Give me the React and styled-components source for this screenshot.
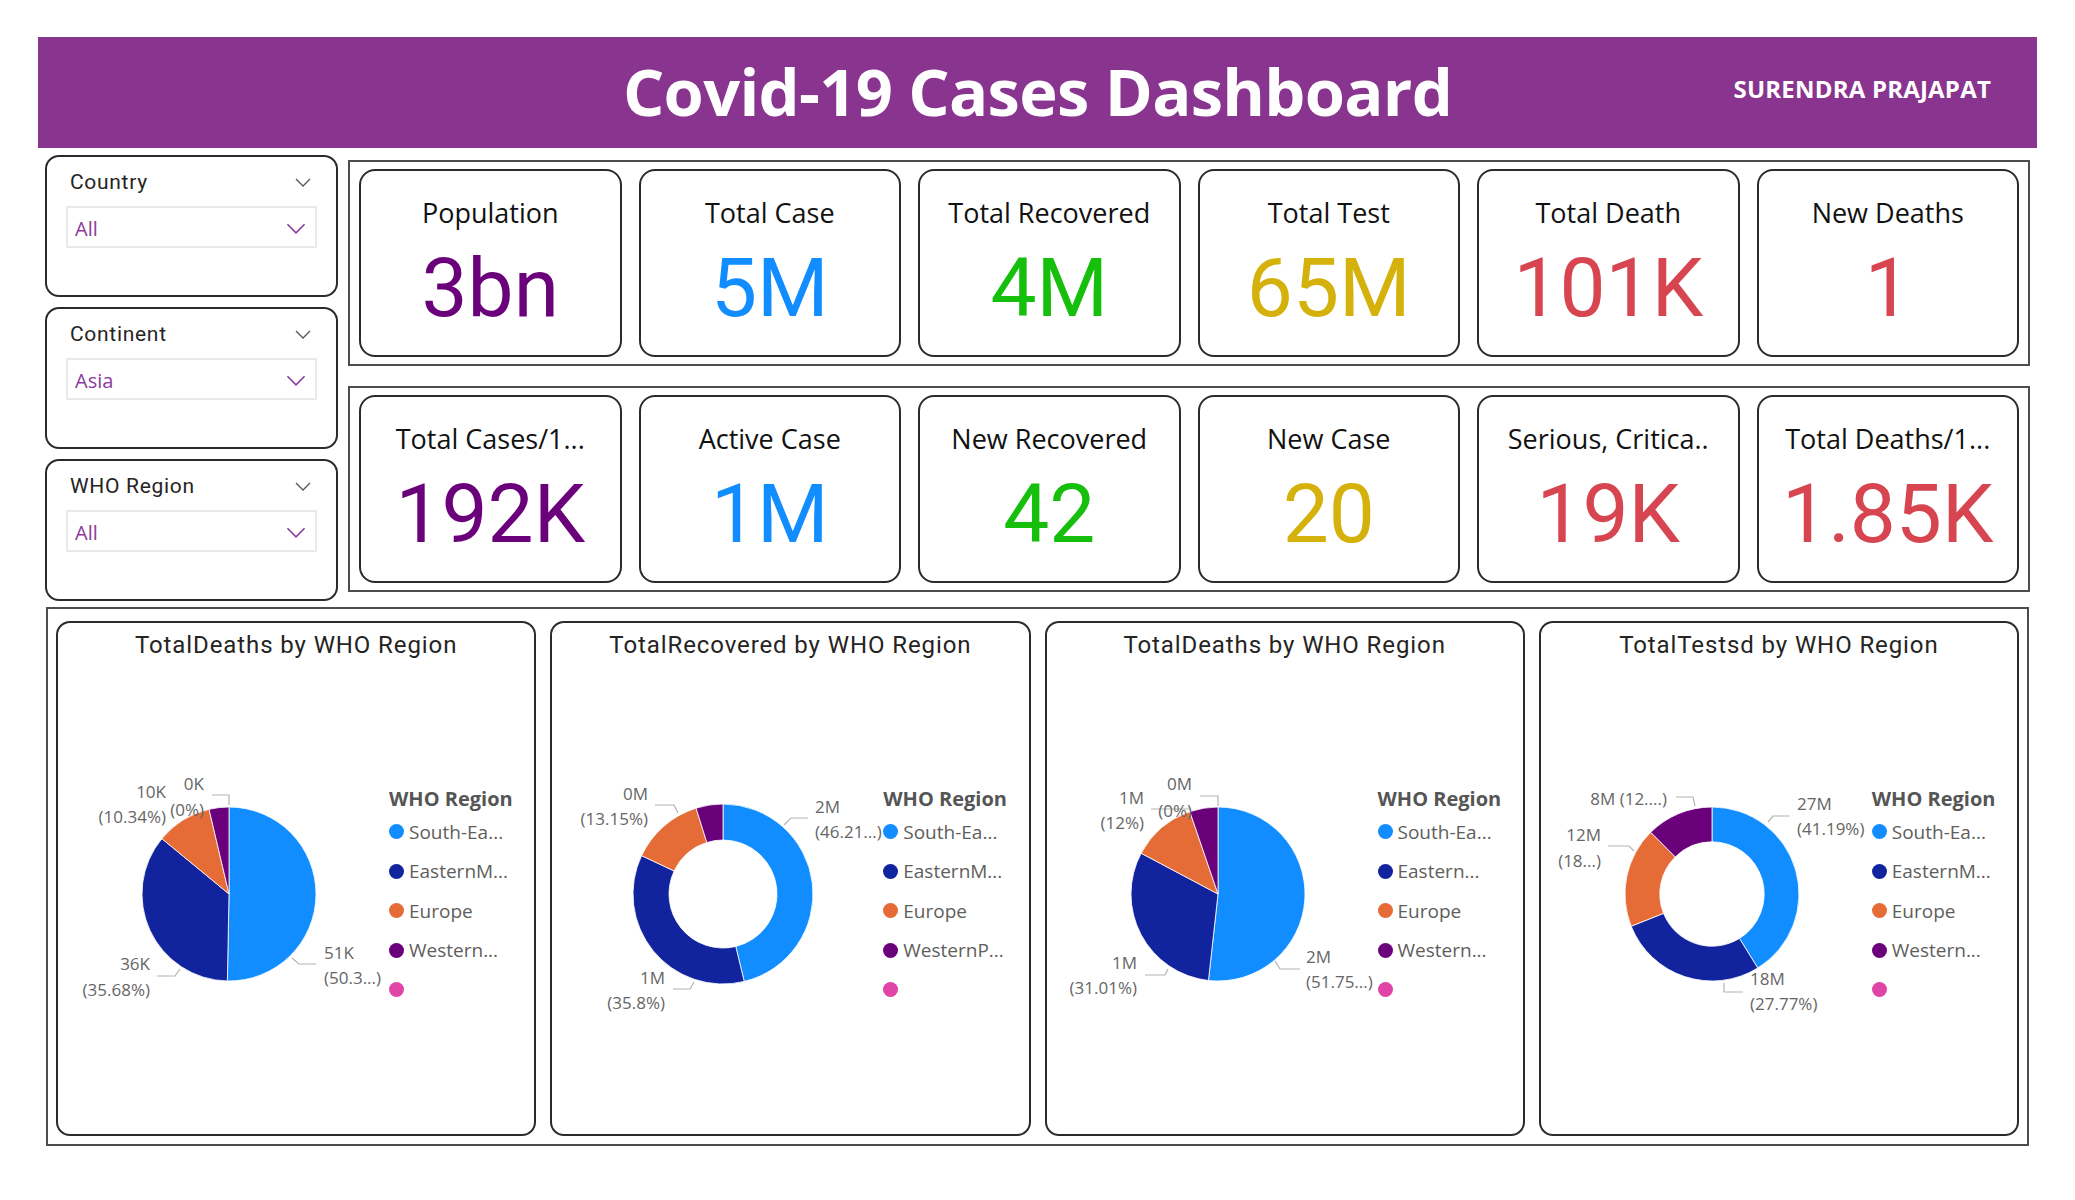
import React from "react";
import styled, { createGlobalStyle } from "styled-components";

const GlobalStyle = createGlobalStyle`
  html, body {
    margin: 0;
    padding: 0;
    background: #ffffff;
  }
  body {
    font-family: "Open Sans", "Segoe UI", sans-serif;
  }
`;

const SLICE_COLORS = ["#118DFF", "#12239E", "#E66C37", "#6B007B"];

const slicers = [
    { title: "Country", value: "All" },
    { title: "Continent", value: "Asia" },
    { title: "WHO Region", value: "All" },
];

const kpiRows = [
    [
        { label: "Population", value: "3bn", color: "#6B007B" },
        { label: "Total Case", value: "5M", color: "#118DFF" },
        { label: "Total Recovered", value: "4M", color: "#15BF0C" },
        { label: "Total Test", value: "65M", color: "#D5B10C" },
        { label: "Total Death", value: "101K", color: "#D64550" },
        { label: "New Deaths", value: "1", color: "#D64550" },
    ],
    [
        { label: "Total Cases/1...", value: "192K", color: "#6B007B" },
        { label: "Active Case", value: "1M", color: "#118DFF" },
        { label: "New Recovered", value: "42", color: "#15BF0C" },
        { label: "New Case", value: "20", color: "#D5B10C" },
        { label: "Serious, Critica..", value: "19K", color: "#D64550" },
        { label: "Total Deaths/1...", value: "1.85K", color: "#D64550" },
    ],
];

const charts = [
    {
        title: "TotalDeaths by WHO Region",
        donut: false,
        r: 87,
        values: [50.3, 35.68, 10.34, 3.68],
        legend: ["South-Ea...", "EasternM...", "Europe", "Western..."],
        labels: [
            { t: "0K", x: -25, y: -109, a: "end" },
            { t: "(0%)", x: -25, y: -83, a: "end" },
            { t: "10K", x: -63, y: -101, a: "end" },
            { t: "(10.34%)", x: -63, y: -76, a: "end" },
            { t: "36K", x: -79, y: 71, a: "end" },
            { t: "(35.68%)", x: -79, y: 97, a: "end" },
            { t: "51K", x: 95, y: 60, a: "start" },
            { t: "(50.3...)", x: 95, y: 85, a: "start" },
        ],
        lines: [
            [-17, -99, 0, -99, 0, -89],
            [-72, 82, -54, 82, -49, 75],
            [63, 64, 70, 70, 87, 70],
        ],
    },
    {
        title: "TotalRecovered by WHO Region",
        donut: true,
        r: 90,
        values: [46.21, 35.8, 13.15, 4.84],
        legend: ["South-Ea...", "EasternM...", "Europe", "WesternP..."],
        labels: [
            { t: "0M", x: -75, y: -99, a: "end" },
            { t: "(13.15%)", x: -75, y: -74, a: "end" },
            { t: "2M", x: 92, y: -86, a: "start" },
            { t: "(46.21...)", x: 92, y: -61, a: "start" },
            { t: "1M", x: -58, y: 85, a: "end" },
            { t: "(35.8%)", x: -58, y: 110, a: "end" },
        ],
        lines: [
            [-68, -89, -49, -89, -45, -81],
            [61, -69, 68, -76, 85, -76],
            [-50, 95, -33, 95, -29, 88],
        ],
    },
    {
        title: "TotalDeaths by WHO Region",
        donut: false,
        r: 87,
        values: [51.75, 31.01, 12, 5.24],
        legend: ["South-Ea...", "Eastern...", "Europe", "Western..."],
        labels: [
            { t: "0M", x: -26, y: -109, a: "end" },
            { t: "(0%)", x: -26, y: -82, a: "end" },
            { t: "1M", x: -74, y: -95, a: "end" },
            { t: "(12%)", x: -74, y: -70, a: "end" },
            { t: "1M", x: -81, y: 70, a: "end" },
            { t: "(31.01%)", x: -81, y: 95, a: "end" },
            { t: "2M", x: 88, y: 64, a: "start" },
            { t: "(51.75...)", x: 88, y: 89, a: "start" },
        ],
        lines: [
            [-18, -98, 0, -98, 0, -88],
            [-67, -85, -28, -85],
            [-73, 81, -53, 81, -50, 75],
            [57, 67, 62, 75, 82, 75],
        ],
    },
    {
        title: "TotalTestsd by WHO Region",
        donut: true,
        r: 87,
        values: [41.19, 27.77, 18.6, 12.44],
        legend: ["South-Ea...", "EasternM...", "Europe", "Western..."],
        labels: [
            { t: "8M (12....)", x: -45, y: -94, a: "end" },
            { t: "12M", x: -111, y: -58, a: "end" },
            { t: "(18...)", x: -111, y: -32, a: "end" },
            { t: "27M", x: 85, y: -89, a: "start" },
            { t: "(41.19%)", x: 85, y: -64, a: "start" },
            { t: "18M", x: 38, y: 86, a: "start" },
            { t: "(27.77%)", x: 38, y: 111, a: "start" },
        ],
        lines: [
            [-36, -97, -19, -97, -17, -88],
            [56, -72, 61, -78, 78, -78],
            [-104, -48, -83, -48, -78, -43],
            [12, 89, 12, 98, 31, 98],
        ],
    },
];

// angle is a fraction of the turn, starting at 12 o'clock, clockwise
const point = (cx, cy, r, a) => [
    cx + r * Math.sin(a * 2 * Math.PI),
    cy - r * Math.cos(a * 2 * Math.PI),
];

const slicePath = (cx, cy, r, ri, a0, a1) => {
    const large = a1 - a0 > 0.5 ? 1 : 0;
    const [x0, y0] = point(cx, cy, r, a0);
    const [x1, y1] = point(cx, cy, r, a1);
    if (!ri) {
        return `M${cx} ${cy} L${x0} ${y0} A${r} ${r} 0 ${large} 1 ${x1} ${y1} Z`;
    }
    const [u0, v0] = point(cx, cy, ri, a0);
    const [u1, v1] = point(cx, cy, ri, a1);
    return `M${x0} ${y0} A${r} ${r} 0 ${large} 1 ${x1} ${y1} L${u1} ${v1} A${ri} ${ri} 0 ${large} 0 ${u0} ${v0} Z`;
};

const Chevron = ({ color, width = 16, height = 9 }) => (
    <svg width={width} height={height} viewBox="0 0 16 9">
        <polyline points="1,1 8,8 15,1" fill="none" stroke={color} strokeWidth="1.3" />
    </svg>
);

const PieChart = ({ chart }) => {
    const cx = 171;
    const cy = 150;
    const { r, values, donut, labels, lines } = chart;
    const total = values.reduce((a, b) => a + b, 0);
    let acc = 0;

    return (
        <ChartSvg width="331" height="300" viewBox="0 0 331 300">
            {values.map((v, i) => {
                const a0 = acc / total;
                acc += v;
                const a1 = acc / total;
                return (
                    <path
                        key={i}
                        d={slicePath(cx, cy, r, donut ? r * 0.6 : 0, a0, a1)}
                        fill={SLICE_COLORS[i]}
                        stroke="#ffffff"
                        strokeWidth="0.8"
                    />
                );
            })}
            {lines.map((l, i) => {
                const pts = [];
                for (let k = 0; k < l.length; k += 2) pts.push(`${cx + l[k]},${cy + l[k + 1]}`);
                return <polyline key={i} points={pts.join(" ")} fill="none" stroke="#b3b3b3" strokeWidth="1.2" />;
            })}
            {labels.map((l, i) => (
                <DataLabel key={i} x={cx + l.x} y={cy + l.y} textAnchor={l.a}>
                    {l.t}
                </DataLabel>
            ))}
        </ChartSvg>
    );
};

const App = () => {
    return (
        <>
            <GlobalStyle />
            <Page>
                <Header>
                    <Title>Covid-19 Cases Dashboard</Title>
                    <Author>SURENDRA PRAJAPAT</Author>
                </Header>

                <TopSection>
                    <SlicerColumn>
                        {slicers.map((s) => (
                            <SlicerCard key={s.title}>
                                <SlicerHead>
                                    <span>{s.title}</span>
                                    <Chevron color="#555" />
                                </SlicerHead>
                                <Dropdown>
                                    <span>{s.value}</span>
                                    <Chevron color="#8B3C9B" width={20} height={11} />
                                </Dropdown>
                            </SlicerCard>
                        ))}
                    </SlicerColumn>

                    <KpiColumn>
                        {kpiRows.map((row, i) => (
                            <KpiRow key={i}>
                                {row.map((k) => (
                                    <KpiCard key={k.label}>
                                        <KpiLabel>{k.label}</KpiLabel>
                                        <KpiValue color={k.color}>{k.value}</KpiValue>
                                    </KpiCard>
                                ))}
                            </KpiRow>
                        ))}
                    </KpiColumn>
                </TopSection>

                <ChartSection>
                    {charts.map((c, i) => (
                        <ChartCard key={i}>
                            <ChartTitle>{c.title}</ChartTitle>
                            <ChartBody>
                                <PieChart chart={c} />
                                <Legend>
                                    <LegendTitle>WHO Region</LegendTitle>
                                    {c.legend.map((name, j) => (
                                        <LegendItem key={j}>
                                            <Dot color={SLICE_COLORS[j]} />
                                            {name}
                                        </LegendItem>
                                    ))}
                                    <LegendItem>
                                        <Dot color="#E044A7" />
                                    </LegendItem>
                                </Legend>
                            </ChartBody>
                        </ChartCard>
                    ))}
                </ChartSection>
            </Page>
        </>
    );
};

export default App;

const Page = styled.div`
    width: 1999px;
    padding: 37px 0 40px 38px;
`;

const Header = styled.header`
    position: relative;
    height: 111px;
    background-color: #89348f;
    display: flex;
    align-items: center;
    justify-content: center;
    color: #ffffff;
`;

const Title = styled.h1`
    margin: 0 0 3px;
    font-family: "Open Sans", sans-serif;
    font-weight: 700;
    font-size: 65px;
    letter-spacing: -0.7px;
    line-height: 1;
`;

const Author = styled.div`
    position: absolute;
    right: 46px;
    top: 50%;
    transform: translateY(-64%);
    font-family: "Open Sans", sans-serif;
    font-weight: 700;
    font-size: 24px;
    letter-spacing: 0.2px;
`;

const TopSection = styled.div`
    display: grid;
    grid-template-columns: 293px 1682px;
    column-gap: 10px;
    padding-left: 7px;
    margin-top: 7px;
`;

const SlicerColumn = styled.div`
    display: flex;
    flex-direction: column;
    gap: 10px;
`;

const SlicerCard = styled.div`
    box-sizing: border-box;
    height: 142px;
    border: 2px solid #2b2b2b;
    border-radius: 14px;
    padding: 11px 19px 0;
`;

const SlicerHead = styled.div`
    display: flex;
    align-items: center;
    justify-content: space-between;
    height: 28px;
    padding: 0 6px 0 4px;
    font-family: Roboto, sans-serif;
    font-size: 21px;
    letter-spacing: 0.7px;
    color: #252423;
`;

const Dropdown = styled.div`
    box-sizing: border-box;
    margin-top: 10px;
    height: 42px;
    border: 2px solid #e9e9e9;
    display: flex;
    align-items: center;
    justify-content: space-between;
    padding: 2px 9px 0 7px;
    font-family: "Open Sans", sans-serif;
    font-size: 20px;
    color: #8b3c9b;
`;

const KpiColumn = styled.div`
    display: flex;
    flex-direction: column;
    gap: 20px;
    margin-top: 5px;
`;

const KpiRow = styled.div`
    box-sizing: border-box;
    height: 206px;
    border: 2px solid #4d4d4d;
    padding: 7px 9px;
    display: grid;
    grid-template-columns: repeat(6, 1fr);
    column-gap: 17px;
`;

const KpiCard = styled.div`
    box-sizing: border-box;
    border: 2px solid #2b2b2b;
    border-radius: 16px;
    display: flex;
    flex-direction: column;
    align-items: center;
    padding-top: 24px;
`;

const KpiLabel = styled.div`
    font-family: "Open Sans", sans-serif;
    font-size: 27px;
    line-height: 36px;
    color: #111111;
    white-space: nowrap;
`;

const KpiValue = styled.div`
    margin-top: 16px;
    font-family: Roboto, sans-serif;
    font-size: 82px;
    line-height: 82px;
    color: ${(props) => props.color};
`;

const ChartSection = styled.div`
    box-sizing: border-box;
    width: 1983px;
    height: 539px;
    margin: 6px 0 0 8px;
    border: 2px solid #4d4d4d;
    padding: 12px 8px 8px;
    display: grid;
    grid-template-columns: repeat(4, 1fr);
    column-gap: 14px;
`;

const ChartCard = styled.div`
    box-sizing: border-box;
    border: 2px solid #2b2b2b;
    border-radius: 14px;
    display: flex;
    flex-direction: column;
`;

const ChartTitle = styled.div`
    padding-top: 6px;
    line-height: 32px;
    text-align: center;
    font-family: Roboto, sans-serif;
    font-size: 24px;
    letter-spacing: 0.9px;
    color: #252423;
`;

const ChartBody = styled.div`
    flex: 1;
    display: flex;
    align-items: center;
    padding-bottom: 8px;
`;

const ChartSvg = styled.svg`
    flex-shrink: 0;
    display: block;
`;

const DataLabel = styled.text`
    font-family: "Open Sans", sans-serif;
    font-size: 17px;
    fill: #666666;
    dominant-baseline: middle;
`;

const Legend = styled.div`
    display: flex;
    flex-direction: column;
    padding-top: 8px;
    font-family: "Open Sans", sans-serif;
`;

const LegendTitle = styled.div`
    font-weight: 700;
    font-size: 20px;
    line-height: 26px;
    color: #555555;
`;

const LegendItem = styled.div`
    display: flex;
    align-items: center;
    gap: 5px;
    height: 39.5px;
    font-size: 19px;
    color: #605e5c;
    white-space: nowrap;
`;

const Dot = styled.span`
    width: 15px;
    height: 15px;
    border-radius: 50%;
    background-color: ${(props) => props.color};
    flex-shrink: 0;
`;
